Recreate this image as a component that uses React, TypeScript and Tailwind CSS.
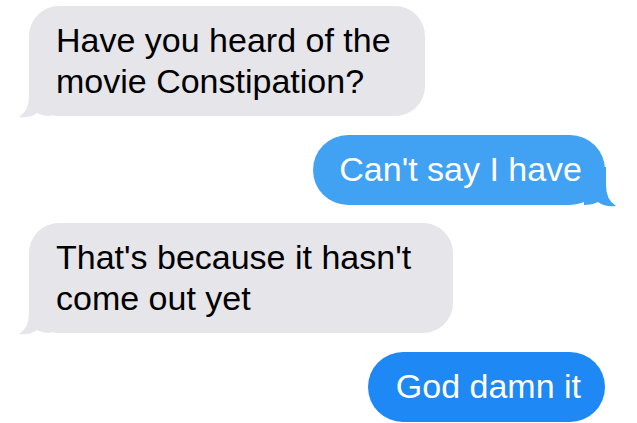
import React from "react";

function Tail({ color, side }: { color: string; side: "left" | "right" }) {
  const pos =
    side === "left"
      ? "absolute left-[-12px] bottom-[-2px]"
      : "absolute right-[-13px] bottom-[-2px] -scale-x-100";
  return (
    <svg className={pos} width="34" height="40" viewBox="0 0 34 40" aria-hidden="true">
      <path
        d="M12 0 L12 18 Q12 33 2 39 Q12 40.5 20 35 Q26 38 34 38 L34 0 Z"
        fill={color}
      />
    </svg>
  );
}

export default function App() {
  const font = { fontFamily: '"Liberation Sans", Arial, Helvetica, sans-serif' };
  return (
    <div
      className="w-[637px] h-[423px] overflow-hidden bg-white flex flex-col pt-[6px]"
      style={font}
    >
      <div className="ml-[29px] relative w-[396px] bg-[#e5e5ea] rounded-[30px] pl-[27px] pr-[20px] pt-[14px] pb-[14px] text-[34px] leading-[41px] text-black">
        <Tail color="#e5e5ea" side="left" />
        <span className="relative">Have you heard of the movie Constipation?</span>
      </div>

      <div className="mt-[19px] self-end mr-[32px] relative bg-[#41a1f2] rounded-[35px] pl-[26px] pr-[23px] pt-[14px] pb-[15px] text-[34px] leading-[41px] text-white">
        <Tail color="#41a1f2" side="right" />
        <span className="relative">Can't say I have</span>
      </div>

      <div className="mt-[18px] ml-[29px] relative w-[424px] bg-[#e5e5ea] rounded-[30px] pl-[27px] pr-[20px] pt-[14px] pb-[14px] text-[34px] leading-[41px] text-black">
        <Tail color="#e5e5ea" side="left" />
        <span className="relative">That's because it hasn't come out yet</span>
      </div>

      <div className="mt-[19px] self-end mr-[32px] relative bg-[#1e88f4] rounded-[35px] pl-[28px] pr-[24px] pt-[14px] pb-[15px] text-[34px] leading-[41px] text-white">
        <span className="relative">God damn it</span>
      </div>
    </div>
  );
}
